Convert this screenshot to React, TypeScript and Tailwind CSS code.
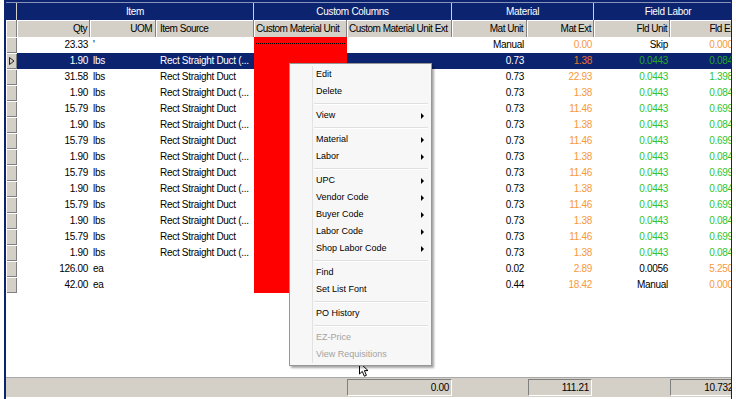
import React from 'react';

type Row = {
  qty: string;
  uom: string;
  src: string;
  mu: string;
  me: string;
  fu: string;
  fe: string;
  fuKind: 'g' | 'k';
  feKind: 'g' | 'o';
  sel?: boolean;
  focus?: boolean;
};

const A = 'Rect Straight Duct (...';
const B = 'Rect Straight Duct';

const small = (qty: string, sel?: boolean): Row => ({
  qty,
  uom: 'lbs',
  src: A,
  mu: '0.73',
  me: '1.38',
  fu: '0.0443',
  fe: '0.0843',
  fuKind: 'g',
  feKind: 'g',
  sel,
});
const big = (): Row => ({
  qty: '15.79',
  uom: 'lbs',
  src: B,
  mu: '0.73',
  me: '11.46',
  fu: '0.0443',
  fe: '0.6994',
  fuKind: 'g',
  feKind: 'g',
});

const rows: Row[] = [
  { qty: '23.33', uom: "'", src: '', mu: 'Manual', me: '0.00', fu: 'Skip', fe: '0.0000', fuKind: 'k', feKind: 'o', focus: true },
  small('1.90', true),
  { qty: '31.58', uom: 'lbs', src: B, mu: '0.73', me: '22.93', fu: '0.0443', fe: '1.3984', fuKind: 'g', feKind: 'g' },
  small('1.90'),
  big(),
  small('1.90'),
  big(),
  small('1.90'),
  big(),
  small('1.90'),
  big(),
  small('1.90'),
  big(),
  small('1.90'),
  { qty: '126.00', uom: 'ea', src: '', mu: '0.02', me: '2.89', fu: '0.0056', fe: '5.2500', fuKind: 'k', feKind: 'o' },
  { qty: '42.00', uom: 'ea', src: '', mu: '0.44', me: '18.42', fu: 'Manual', fe: '0.0000', fuKind: 'k', feKind: 'o' },
];

type MenuItem = { label: string; arrow?: boolean; disabled?: boolean } | 'sep';

const menu: MenuItem[] = [
  { label: 'Edit' },
  { label: 'Delete' },
  'sep',
  { label: 'View', arrow: true },
  'sep',
  { label: 'Material', arrow: true },
  { label: 'Labor', arrow: true },
  'sep',
  { label: 'UPC', arrow: true },
  { label: 'Vendor Code', arrow: true },
  { label: 'Buyer Code', arrow: true },
  { label: 'Labor Code', arrow: true },
  { label: 'Shop Labor Code', arrow: true },
  'sep',
  { label: 'Find' },
  { label: 'Set List Font' },
  'sep',
  { label: 'PO History' },
  'sep',
  { label: 'EZ-Price', disabled: true },
  { label: 'View Requisitions', disabled: true },
];

function Indicator({ sel }: { sel?: boolean }) {
  return (
    <div className="w-[11px] h-full shrink-0 bg-[#d4d0c8] shadow-[inset_1px_1px_0_#ffffff,inset_-1px_-1px_0_#808080] flex items-center justify-center">
      {sel && (
        <svg width="6" height="8" viewBox="0 0 6 8">
          <polygon points="0.5,0.5 5,4 0.5,7.5" fill="#d4d0c8" stroke="#222" strokeWidth="1" />
        </svg>
      )}
    </div>
  );
}

function GridRow({ r }: { r: Row }) {
  const base = r.sel ? 'bg-[#0c2470] text-white' : 'bg-white text-black';
  const orange = r.sel ? 'text-[#e8742c]' : 'text-[#f7993a]';
  const green = r.sel ? 'text-[#22a822]' : 'text-[#2ec42e]';
  const fuColor = r.fuKind === 'g' ? green : r.sel ? 'text-white' : 'text-black';
  const feColor = r.feKind === 'g' ? green : orange;
  return (
    <div className="flex h-[16px] shrink-0">
      <Indicator sel={r.sel} />
      <div className={`flex flex-1 items-center ${base}`}>
        <div className="w-[73px] shrink-0 text-right pr-[2px] whitespace-nowrap">{r.qty}</div>
        <div className="w-[66px] shrink-0 pl-[3px] whitespace-nowrap">{r.uom}</div>
        <div className="w-[98px] shrink-0 pl-[4px] whitespace-nowrap overflow-hidden">{r.src}</div>
        <div className="w-[93px] shrink-0 h-full bg-[#ff0000] flex flex-col px-[2px]">
          {r.focus && <div className="mt-[6px] border-t border-dotted border-black" />}
        </div>
        <div className="w-[105px] shrink-0" />
        <div className="w-[75px] shrink-0 text-right pr-[3px]">{r.mu}</div>
        <div className={`w-[67px] shrink-0 text-right pr-[2px] ${orange}`}>{r.me}</div>
        <div className={`w-[76px] shrink-0 text-right pr-[2px] ${fuColor}`}>{r.fu}</div>
        <div className={`w-[72px] shrink-0 text-right pr-[4px] whitespace-nowrap ${feColor}`}>{r.fe}</div>
      </div>
    </div>
  );
}

const hdrCell = 'shrink-0 h-full flex items-center border-r border-[#808080] shadow-[inset_1px_1px_0_#ffffff] whitespace-nowrap overflow-hidden tracking-[-0.5px]';

function Cursor() {
  return (
    <svg className="absolute left-[359px] top-[362px]" width="12" height="16" viewBox="0 0 12 16">
      <path d="M0.5 0.5 L0.5 12 L3.3 9.4 L5.3 14.2 L7.4 13.3 L5.4 8.6 L9 8.6 Z" fill="#ffffff" stroke="#000000" strokeWidth="1" strokeLinejoin="miter" />
    </svg>
  );
}

export default function App() {
  return (
    <div className="relative w-[736px] h-[399px] bg-white overflow-hidden font-['Liberation_Sans',Arial,sans-serif] text-[10px] tracking-[-0.3px] leading-none">
      <div className="ml-[4px] w-[728px] h-[399px] border-l-2 border-r border-t-2 border-[#0c2470] flex flex-col overflow-hidden">
        <div className="h-px bg-[#8a93b8] shrink-0" />
        {/* group header */}
        <div className="flex h-[17px] shrink-0 bg-[#0c2470] text-white">
          <div className="w-[11px] shrink-0 border-r border-[#d4d0c8]" />
          <div className="w-[237px] shrink-0 border-r border-[#d4d0c8] flex items-center justify-center">Item</div>
          <div className="w-[198px] shrink-0 border-r border-[#d4d0c8] flex items-center justify-center">Custom Columns</div>
          <div className="w-[142px] shrink-0 border-r border-[#d4d0c8] flex items-center justify-center">Material</div>
          <div className="w-[148px] shrink-0 flex items-center justify-center">Field Labor</div>
        </div>
        {/* column header */}
        <div className="flex h-[17px] shrink-0 bg-[#d4d0c8] text-black">
          <div className={`w-[11px] ${hdrCell}`} />
          <div className={`w-[73px] ${hdrCell} justify-end pr-[2px]`}>Qty</div>
          <div className={`w-[66px] ${hdrCell} justify-end pr-[3px]`}>UOM</div>
          <div className={`w-[98px] ${hdrCell} pl-[4px]`}>Item Source</div>
          <div className={`w-[93px] ${hdrCell} pl-[2px]`}>Custom Material Unit</div>
          <div className={`w-[105px] ${hdrCell} pl-[2px]`}>Custom Material Unit Ext</div>
          <div className={`w-[75px] ${hdrCell} justify-end pr-[3px]`}>Mat Unit</div>
          <div className={`w-[67px] ${hdrCell} justify-end pr-[2px]`}>Mat Ext</div>
          <div className={`w-[76px] ${hdrCell} justify-end pr-[2px]`}>Fld Unit</div>
          <div className={`w-[72px] ${hdrCell} justify-end pr-[4px]`}>Fld Ext</div>
        </div>
        {/* rows */}
        {rows.map((r, i) => (
          <GridRow key={i} r={r} />
        ))}
        <div className="flex-1" />
        {/* footer */}
        <div className="flex h-[20px] shrink-0 bg-[#d4d0c8] border-t border-[#a8a8a8] items-center">
          <div className="w-[341px] shrink-0" />
          <div className="w-[105px] h-[17px] shrink-0 border-t border-l border-[#808080] border-b border-r border-b-white border-r-white flex items-center justify-end pr-[2px]">0.00</div>
          <div className="w-[75px] shrink-0" />
          <div className="w-[64px] h-[17px] ml-[1px] mr-[2px] shrink-0 border-t border-l border-[#808080] border-b border-r border-b-white border-r-white flex items-center justify-end pr-[2px]">111.21</div>
          <div className="w-[76px] shrink-0" />
          <div className="w-[72px] h-[17px] shrink-0 border-t border-l border-[#808080] border-b border-r border-b-white border-r-white flex items-center justify-end pr-[8px]">10.732</div>
        </div>
        <div className="h-[2px] shrink-0 bg-white" />
      </div>

      <Cursor />

      {/* context menu */}
      <div className="absolute left-[289px] top-[63px] w-[143px] h-[303px] bg-[#f7f7f7] border border-[#979797] shadow-[2px_2px_2px_rgba(0,0,0,0.35)] p-[2px] flex flex-col font-['Liberation_Sans',Arial,sans-serif] text-[9px] tracking-normal">
        {menu.map((m, i) =>
          m === 'sep' ? (
            <div key={i} className="flex h-[7px] shrink-0">
              <div className="w-[21px] shrink-0 border-r border-[#e2e2e2]" />
              <div className="flex-1 flex flex-col justify-center pl-[1px] pr-[1px]">
                <div className="h-px bg-[#e0e0e0]" />
                <div className="h-px bg-white" />
              </div>
            </div>
          ) : (
            <div key={i} className="flex h-[17px] shrink-0 items-center">
              <div className="w-[21px] h-full shrink-0 border-r border-[#e2e2e2]" />
              <div className={`flex-1 pl-[3px] ${m.disabled ? 'text-[#a3a3a3]' : 'text-black'}`}>{m.label}</div>
              {m.arrow && (
                <div className="w-0 h-0 mr-[5px] border-l-[3px] border-l-black border-y-[3px] border-y-transparent" />
              )}
            </div>
          )
        )}
      </div>
    </div>
  );
}
